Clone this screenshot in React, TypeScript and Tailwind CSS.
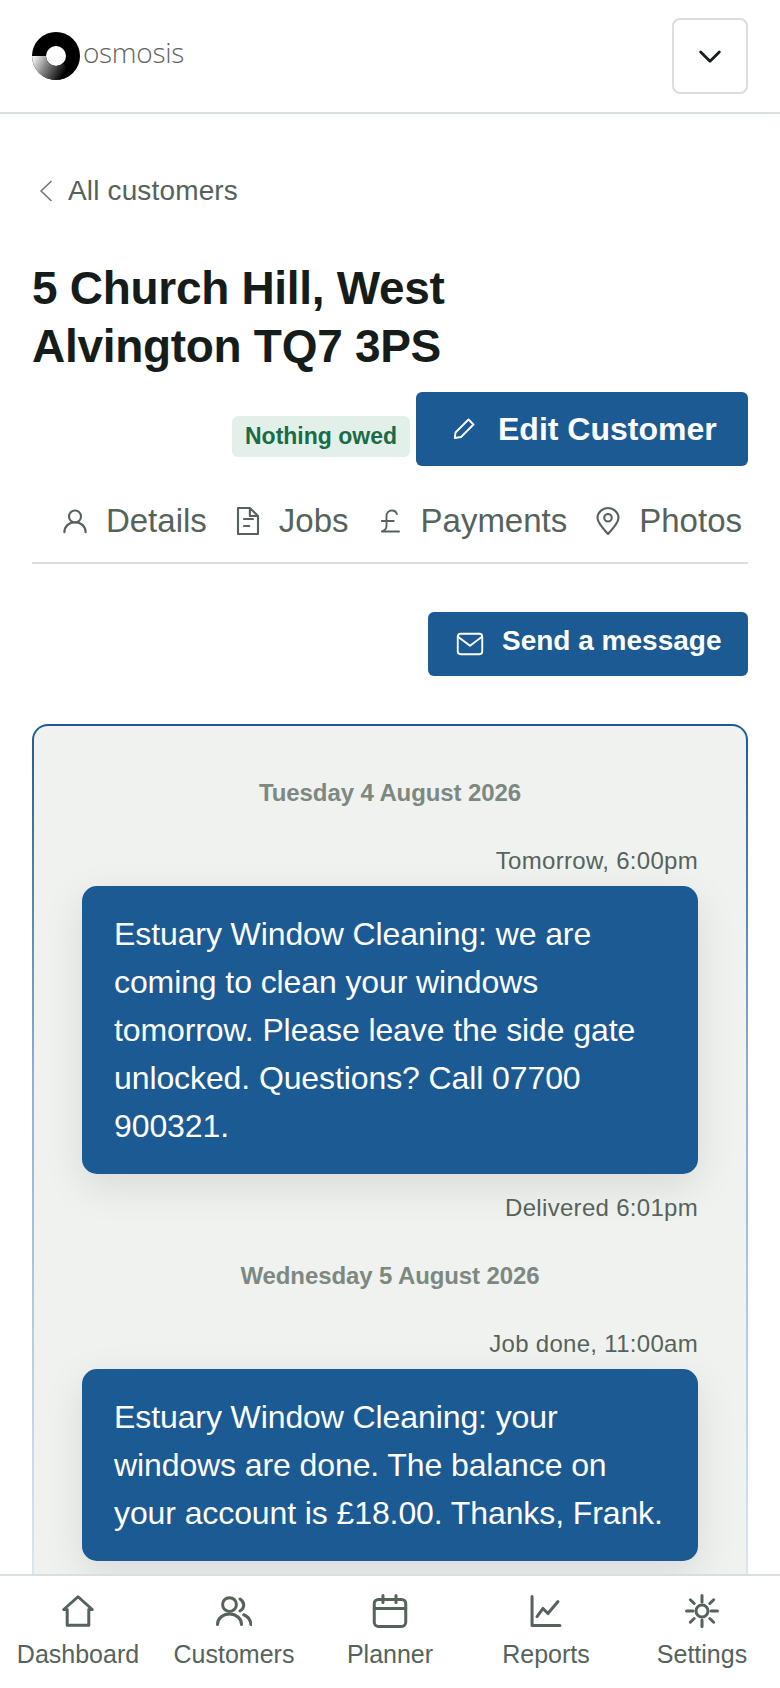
import type { ReactNode } from "react";

const font = { fontFamily: '"Liberation Sans", Arial, sans-serif' };

function Icon({ size = 28, width = 2, children, className }: { size?: number; width?: number; children: ReactNode; className?: string }) {
  return (
    <svg
      viewBox="0 0 24 24"
      width={size}
      height={size}
      fill="none"
      stroke="currentColor"
      strokeWidth={width}
      strokeLinecap="round"
      strokeLinejoin="round"
      className={className}
    >
      {children}
    </svg>
  );
}

function Logo() {
  return (
    <div className="flex items-center">
      <svg viewBox="0 0 48 48" width="48" height="48">
        <defs>
          <linearGradient id="ring" gradientUnits="userSpaceOnUse" x1="2" y1="26" x2="32" y2="42">
            <stop offset="0" stopColor="#eeeeee" />
            <stop offset="0.4" stopColor="#888888" />
            <stop offset="1" stopColor="#000000" />
          </linearGradient>
        </defs>
        <path d="M0 24a24 24 0 0 1 48 0a24 24 0 0 1-48 0zM14 24a10 10 0 0 0 20 0a10 10 0 0 0-20 0z" fill="#000" fillRule="evenodd" />
        <path d="M0 24a24 24 0 0 0 24 24a24 24 0 0 0 15-6L31 31a10 10 0 0 1-17-7z" fill="url(#ring)" />
      </svg>
      <span className="-mt-[8px] ml-[3px] text-[28px] tracking-[-0.3px] text-[#5f6463]" style={{ fontFamily: '"Open Sans", sans-serif', fontWeight: 300 }}>
        osmosis
      </span>
    </div>
  );
}

function Tab({ icon, label }: { icon: ReactNode; label: string }) {
  return (
    <div className="flex items-center gap-[16px]">
      {icon}
      <span>{label}</span>
    </div>
  );
}

function NavItem({ icon, label }: { icon: ReactNode; label: string }) {
  return (
    <div className="flex flex-col items-center">
      <div className="flex h-[38px] items-center">{icon}</div>
      <span className="mt-[9px] text-[25px] leading-[30px]">{label}</span>
    </div>
  );
}

function Message({ when, text, status }: { when: string; text: string; status?: string }) {
  return (
    <div className="px-[48px]">
      <div className="text-right text-[24px] leading-[30px] tracking-[0.3px] text-[#55635b]">{when}</div>
      <div className="mt-[10px] rounded-[15px] bg-[#1c5a94] px-[32px] py-[24px] text-[32px] leading-[48px] tracking-[-0.1px] text-white shadow-[0_12px_40px_rgba(0,0,0,0.1)]">
        {text}
      </div>
      {status && <div className="mt-[19px] text-right text-[24px] leading-[30px] tracking-[0.3px] text-[#55635b]">{status}</div>}
    </div>
  );
}

function DateLabel({ children }: { children: ReactNode }) {
  return <div className="text-center text-[24px] font-bold leading-[30px] tracking-[-0.1px] text-[#7d8980]">{children}</div>;
}

export default function App() {
  return (
    <div className="flex h-[1688px] flex-col overflow-hidden bg-white" style={font}>
      {/* Top bar */}
      <header className="flex h-[114px] shrink-0 items-start justify-between border-b-2 border-[#d9dfdd] px-[32px] pt-[18px]">
        <div className="pt-[14px]">
          <Logo />
        </div>
        <button className="flex h-[76px] w-[76px] items-center justify-center rounded-[8px] border-2 border-[#d9dfdd] text-[#161c1a]">
          <Icon size={28} width={2.4}>
            <path d="m4 8.500 8 8 8-8" />
          </Icon>
        </button>
      </header>

      <main className="min-h-0 flex-1 overflow-hidden px-[32px]">
        <div className="mt-[59px] flex items-center text-[#55635b]">
          <Icon size={24} width={1.6} className="ml-[2px] mr-[10px] text-[#6b7870]">
            <path d="m17 2.500-10 9.500 10 9.500" />
          </Icon>
          <span className="text-[28px] leading-[36px] tracking-[0.15px]">All customers</span>
        </div>

        <h1 className="mt-[50px] w-[480px] text-[46px] font-bold leading-[58px] tracking-[-0.3px] text-[#161c1a]">
          5 Church Hill, West Alvington TQ7 3PS
        </h1>

        <div className="mt-[17px] flex items-start justify-end gap-[6px]">
          <span className="mt-[24px] flex h-[41px] w-[178px] items-center justify-center rounded-[6px] bg-[#e3f0ea] text-[23px] font-bold text-[#1a6b47]">
            Nothing owed
          </span>
          <button className="flex h-[74px] w-[332px] items-center rounded-[6px] bg-[#1c5a94] pl-[36px] text-[32px] font-bold text-white">
            <Icon size={24} width={1.9}>
              <path d="M16.500 2.500 21.500 7.500 9 20 2.800 21 3.500 15.500z" />
            </Icon>
            <span className="ml-[22px]">Edit Customer</span>
          </button>
        </div>

        {/* Tabs */}
        <div className="mt-[33px] flex h-[65px] items-start justify-end gap-[26px] border-b-2 border-[#d9dfdd] pr-[6px] text-[33px] leading-[44px] text-[#55635b]">
          <Tab
            label="Details"
            icon={
              <Icon size={30} width={1.7}>
                <circle cx="12" cy="8.400" r="4.800" />
                <path d="M3.500 21c0-4.500 3.500-8 8.500-8s8.500 3.500 8.500 8" />
              </Icon>
            }
          />
          <Tab
            label="Jobs"
            icon={
              <Icon size={30} width={1.7}>
                <path d="M4 1.600h9.500L20 8v14.400H4zM13.500 1.600V8H20M8.800 10.400H16M8.800 16H13" />
              </Icon>
            }
          />
          <Tab
            label="Payments"
            icon={
              <Icon size={30} width={1.5}>
                <path d="M17.500 6.500C17 4.500 15.500 3.600 13.500 3.600 10.800 3.600 9.200 5.500 9.200 8v8c0 2-1.200 3.500-3.700 4.400h13.700M5.500 12H15" />
              </Icon>
            }
          />
          <Tab
            label="Photos"
            icon={
              <Icon size={30} width={1.7}>
                <path d="M12 22.400C7 17 3.600 13 3.600 9.600a8.400 8 0 0 1 16.800 0C20.400 13 17 17 12 22.400z" />
                <circle cx="12" cy="9.400" r="3" />
              </Icon>
            }
          />
        </div>

        <div className="mt-[48px] flex justify-end">
          <button className="flex h-[64px] w-[320px] items-center rounded-[6px] bg-[#1c5a94] pl-[28px] text-[28px] font-bold text-white">
            <Icon size={28} width={1.6}>
              <rect x="1.500" y="3.250" width="21" height="17.500" rx="2.500" />
              <path d="m2 6 10 7.500L22 6" />
            </Icon>
            <span className="-mt-[6px] ml-[18px]">Send a message</span>
          </button>
        </div>

        {/* Message log; runs on under the bottom bar */}
        <div className="mt-[48px] rounded-[16px] bg-gradient-to-b from-[#1c5a94] via-[#8fb0d0] via-40% to-[#dfe9f2] p-[2px]">
          <div className="rounded-[14px] bg-[#f0f2f0] pb-[40px] pt-[52px]">
            <DateLabel>Tuesday 4 August 2026</DateLabel>
            <div className="mt-[38px]">
              <Message
                when="Tomorrow, 6:00pm"
                text="Estuary Window Cleaning: we are coming to clean your windows tomorrow. Please leave the side gate unlocked. Questions? Call 07700 900321."
                status="Delivered 6:01pm"
              />
            </div>
            <div className="mt-[38px]">
              <DateLabel>Wednesday 5 August 2026</DateLabel>
            </div>
            <div className="mt-[38px]">
              <Message
                when="Job done, 11:00am"
                text="Estuary Window Cleaning: your windows are done. The balance on your account is £18.00. Thanks, Frank."
              />
            </div>
          </div>
        </div>
      </main>

      {/* Bottom nav */}
      <nav className="relative grid h-[114px] shrink-0 grid-cols-5 border-t-2 border-[#d9dfdd] bg-white pt-[16px] text-[#55635b]">
        <NavItem
          label="Dashboard"
          icon={
            <Icon size={36} width={2}>
              <path d="M12 2.500 2.500 11h2.300v10.500h14.400V11h2.300z" />
            </Icon>
          }
        />
        <NavItem
          label="Customers"
          icon={
            <Icon size={36} width={2}>
              <circle cx="9" cy="7.700" r="4.600" />
              <path d="M1 21c0-4 3.500-7 8-7s8 3 8 7M16 4c1.500 1 2.500 2.500 2.500 4s-1 3-2.500 4M18.500 14.500c2.500 1 4.500 3.500 4.800 6.500" />
            </Icon>
          }
        />
        <NavItem
          label="Planner"
          icon={
            <Icon size={36} width={2}>
              <rect x="1.500" y="4.300" width="21" height="18" rx="2.800" />
              <path d="M1.500 10.300h21M7.300 1.700v4.600M16 1.700v4.600" />
            </Icon>
          }
        />
        <NavItem
          label="Reports"
          icon={
            <Icon size={36} width={2}>
              <path d="M2.700 2.300v19.400h18.600M6 15.700l4-5.400 3.300 3.400L20 5.700" />
            </Icon>
          }
        />
        <NavItem
          label="Settings"
          icon={
            <Icon size={36} width={2}>
              <circle cx="12" cy="12" r="4" />
              <path d="M12 1.700V6M12 18v4.300M1.700 12H6M18 12h4.300M4.200 4.500 6.800 7M17.200 17l2.600 2.500M4.200 19.500 6.800 17M17.200 7l2.600-2.500" />
            </Icon>
          }
        />
      </nav>
    </div>
  );
}
